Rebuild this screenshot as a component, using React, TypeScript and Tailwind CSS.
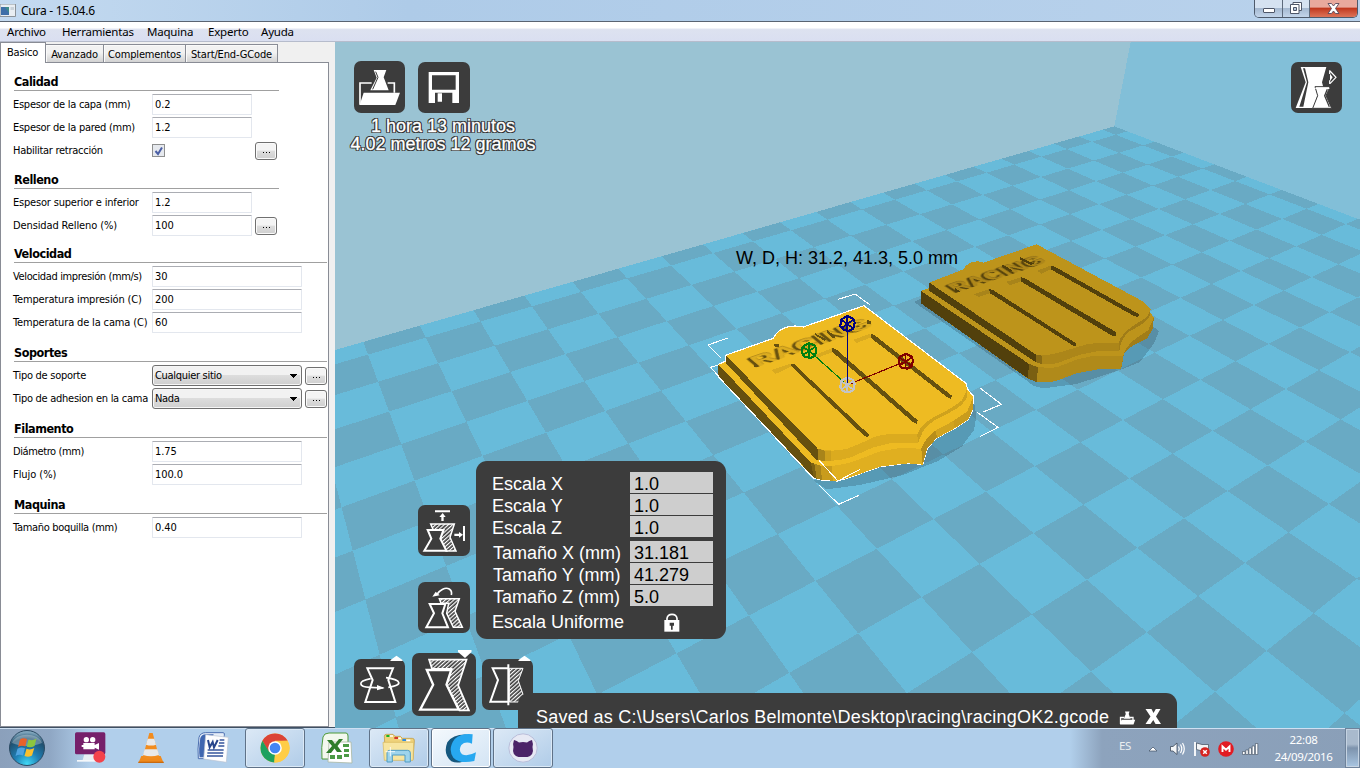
import type { ReactNode } from "react";

/* ---------- build plate: projective mapping from tile grid to screen ---------- */

type Point = [number, number];

const depth = (i: number, j: number) => 1 - 0.027445 * i - 0.0185807 * j;

const project = (i: number, j: number): Point => {
  const w = depth(i, j);
  return [
    (1115.808 - 4.06276 * i - 44.22725 * j) / w,
    (134.769 + 6.60686 * i + 4.40224 * j) / w,
  ];
};

const quad = (points: Point[]) =>
  "M" + points.map(([x, y]) => `${x.toFixed(1)} ${y.toFixed(1)}`).join("L") + "Z";

const darkTiles = (() => {
  const parts: string[] = [];
  for (let i = -1; i < 18; i++) {
    for (let j = -1; j < 28; j++) {
      if ((i + j) % 2 !== 0 || depth(i + 1, j + 1) < 0.1) continue;
      const i0 = Math.max(i, -0.5);
      const j0 = Math.max(j, -0.5);
      parts.push(
        quad([project(i0, j0), project(i + 1, j0), project(i + 1, j + 1), project(i0, j + 1)]),
      );
    }
  }
  return parts.join("");
})();

const floor = quad([project(-0.5, -0.5), project(12, -0.5), [1700, 900], [200, 900], project(-0.5, 24)]);

/* ---------- scene ---------- */

function Wheel({ x, y, color }: { x: number; y: number; color: string }) {
  return (
    <g transform={`translate(${x} ${y})`} fill="none" stroke={color} strokeWidth="6.5">
      <path d="M0-23L17-15L22-4L18 15L5 22L-11 19L-21 8L-19-12Z" />
      <path d="M0-22V22M-19-12L18 14M19-12L-18 13" strokeWidth="5" />
    </g>
  );
}

function FrontShield() {
  return (
    <g transform="translate(690 230) scale(.33333)">
      <path
        d="M852 515L859 560L852 600L815 650L740 695L705 708L640 735L510 765L410 778L370 752L700 640Z"
        fill="#2c4450"
        fillOpacity=".27"
      />
      <path
        d="M85 403L106 394V376L250 325C262 298 295 281 340 291L522 227L828 460L833 478L850 498L848 540L835 568L800 592L740 624L712 655L698 704Q670 699 640 701L570 710L480 742L442 753L395 750L370 744L85 440Z"
        fill="#EEBB22"
        stroke="#fff"
        strokeWidth="3.5"
      />
      <path d="M85 403L362 697L372 743L85 438Z" fill="#66500F" />
      <path d="M107 376L383 656V690L378 688L108 399Z" fill="#66500F" />
      <path
        d="M383 656Q430 668 475 655L510 641L560 618L605 611L682 613Q690 590 720 568L780 536L815 512L832 476L832 500Q822 526 780 547L730 573Q690 603 684 638L600 640L550 652L480 683Q430 698 383 690Z"
        fill="#DBAB1F"
      />
      <path
        d="M682 613Q690 590 720 568L780 536L815 512L832 476L832 500Q822 526 780 547L730 573Q690 603 684 638Z"
        fill="#CFA21D"
      />
      <path
        d="M362 697L392 707Q440 712 500 691L570 664L630 654L694 656Q706 625 736 602L790 573L832 544L850 500L848 540L835 568L800 592L740 624L712 655L698 704Q670 699 640 701L570 710L480 742L442 753L395 750L372 744Z"
        fill="#E0AF20"
      />
      <path d="M362 697L392 707L396 750L372 744Z" fill="#A8841A" />
      <path d="M362 697L373 701L380 746L372 744Z" fill="#7A6012" />
      <path d="M392 707Q410 710 425 708L428 752L396 750Z" fill="#C99C1C" />
      <path d="M694 656Q706 625 736 602L742 622L712 655L698 704Z" fill="#B88E1A" />
      <path d="M736 602L790 573L794 594L742 624Z" fill="#D2A41F" />
      <path d="M790 573L832 544L850 500L848 540L835 568L794 594Z" fill="#C99C1D" />
      <path d="M383 656L404 662V693L383 690Z" fill="#A8841A" />
      <path d="M404 662L424 664V694L404 693ZM682 613L694 590L696 612L684 638Z" fill="#CC9F1D" />
      <path
        d="M245 420L300 401L308 408L256 432ZM372 376L425 355L430 366L382 383ZM489 330L540 311L546 321L500 339Z"
        fill="#D9AA20"
      />
      <path d="M303 402H312L538 615L534 621L524 619L305 410Z" fill="#66500F" />
      <path d="M426 352L442 361L683 571L680 581L670 577L427 366Z" fill="#66500F" />
      <path d="M542 310L553 315L787 498L782 506L772 502L543 324Z" fill="#66500F" />
      <text
        transform="matrix(2.34 -.82 1.1 .92 203 411)"
        fontFamily="Liberation Sans, sans-serif"
        fontSize="38"
        fontWeight="700"
        fill="#DDAD20"
        className="[filter:drop-shadow(-4px_0_0_#66500F)_drop-shadow(1px_-2px_0_#B88E1A)]"
      >
        RACING
      </text>
      <path
        d="M192 401L203 405L200 411L191 409ZM253 343L266 343V352L254 351ZM376 310L410 329L404 333L376 316ZM410 299L438 321L428 325L410 308ZM530 268L545 275L540 284L530 280Z"
        fill="#66500F"
      />
      <g fill="none" stroke="#fff" strokeWidth="3.2">
        <path d="M445 208L495 192L539 224M113 324L54 345L92 383M84 405L62 412L85 438M870 474L934 523L880 546M862 547L924 592L870 620M388 692L444 753L510 718M388 766L446 823L507 796" />
      </g>
      <g strokeWidth="3.5" fill="none">
        <path d="M357 362L472 465" stroke="#007F10" />
        <path d="M472 465L647 394" stroke="#7F0000" />
      </g>
      <Wheel x={357} y={362} color="#007F10" />
      <Wheel x={647} y={394} color="#7F0000" />
      <Wheel x={472} y={281} color="#00007F" />
      <Wheel x={472} y={465} color="#C4C4C4" />
      <path d="M472 460V300" stroke="#00007F" strokeWidth="3.5" />
    </g>
  );
}

function BackShield() {
  return (
    <g transform="translate(900 230) scale(.33333)">
      <path
        d="M63 205L42 216L385 455L400 468L430 475L530 462L660 420L720 396L762 340L777 303L760 290Z"
        fill="#2c4450"
        fillOpacity=".27"
      />
      <path
        d="M63 183L88 174V158L190 118C200 98 228 88 250 98L410 43L725 212L752 236L750 248L762 262L758 296L742 325L690 352L672 372L663 418L600 417L530 430L470 452Q430 464 385 447L63 220Z"
        fill="#BD941B"
      />
      <path d="M63 183L386 401V447L63 220Z" fill="#52400C" />
      <path d="M88 158L408 374V397L88 183Z" fill="#52400C" />
      <path
        d="M408 374Q440 380 490 364L560 343L600 338H656Q664 312 700 287L740 262L752 238L748 262Q735 280 690 303Q662 324 658 363L600 362L540 374L470 400Q430 407 408 397Z"
        fill="#AC8619"
      />
      <path d="M656 338Q664 312 700 287L740 262L752 238L748 262Q735 280 690 303Q662 324 658 363Z" fill="#A07C18" />
      <path
        d="M386 401Q420 417 470 412L530 389L580 377L670 378Q676 348 712 322L745 300L762 262L758 296L742 325L690 352L672 372L663 418L600 417L530 430L470 452Q430 464 385 447Z"
        fill="#B08A1A"
      />
      <path d="M386 401L414 412L410 456L385 447Z" fill="#7A5F12" />
      <path d="M670 378Q676 348 712 322L745 300L762 262L758 296L742 325L690 352L672 372L663 418Z" fill="#A17D18" />
      <path d="M408 374L426 377V403L408 397Z" fill="#886A14" />
      <path
        d="M222 193L266 178L274 188L236 201ZM318 156L362 142L368 152L330 166ZM412 122L452 107L458 116L424 131Z"
        fill="#A8841A"
      />
      <path d="M268 177L282 182L530 341L527 349L518 346L269 189Z" fill="#52400C" />
      <path d="M363 141L378 147L649 307L646 320L638 318L364 155Z" fill="#52400C" />
      <path d="M453 106L466 111L719 254L714 261L702 258L454 119Z" fill="#52400C" />
      <text
        transform="matrix(1.88 -.63 1.2 .78 170 188)"
        fontFamily="Liberation Sans, sans-serif"
        fontSize="37"
        fontWeight="700"
        fill="#AE871A"
        className="[filter:drop-shadow(-4px_0_0_#52400C)_drop-shadow(1px_-2px_0_#94731A)]"
      >
        RACING
      </text>
      <path d="M165 173L180 184L174 188L164 181ZM306 103L338 121L328 125L306 110ZM360 81L402 101L392 105L360 88Z" fill="#52400C" />
    </g>
  );
}

function Scene() {
  return (
    <svg className="block h-[686px] w-[1025px]" viewBox="335 42 1025 686" shapeRendering="crispEdges">
      <rect x="335" y="42" width="1025" height="686" fill="#9AC3D3" />
      <path d="M1130.7 42H1360V400H1114.3V126.3Z" fill="#82BFD8" />
      <path d={floor} fill="#68BBDA" />
      <path d={darkTiles} fill="#69AAC4" />
      <BackShield />
      <FrontShield />
    </svg>
  );
}

/* ---------- viewport tools ---------- */

const tile = "block rounded-[7px] bg-[#3C3C3C]";

const HatchDefs = () => (
  <defs>
    <pattern id="hatch" width="8.5" height="8.5" patternUnits="userSpaceOnUse" patternTransform="rotate(-42)">
      <rect width="8.5" height="3.6" fill="#fff" />
    </pattern>
  </defs>
);

const OpenIcon = () => (
  <svg className={`${tile} h-[52px] w-[51px]`} viewBox="57 63 153 156">
    <path d="M75 194V129H110M158 129H178V158" fill="none" stroke="#fff" strokeWidth="5" />
    <path d="M86 158H195L181 195H74L80 176Z" fill="#fff" />
    <path d="M116 90H154L146 112L161 151H106L125 113Z" fill="#fff" />
    <path d="M122 95L129 112L113 148" fill="none" stroke="#3C3C3C" strokeWidth="3" />
  </svg>
);

const SaveIcon = () => (
  <svg className={`${tile} h-[51px] w-[52px]`} viewBox="249 66 156 153">
    <path d="M281 96H372V189H352V158H300V189H281ZM291 106V149H362V106Z" fill="#fff" fillRule="evenodd" />
    <path d="M308 160H321V185H308Z" fill="#fff" />
  </svg>
);

const ViewIcon = () => (
  <svg className={`${tile} h-[51px] w-[51px]`} viewBox="813 186 153 153">
    <path d="M842 201H919L906 247L910 262H885L893 285L880 324H827L857 247Z" fill="#fff" />
    <path d="M849 205L861 247L838 320L850 320L865 247L855 205Z" fill="#3C3C3C" />
    <path d="M885 260H930L918 287L935 325H878L893 287Z" fill="#fff" stroke="#3C3C3C" strokeWidth="3" />
    <path d="M886 265H928" stroke="#fff" strokeWidth="4" />
    <path d="M922 268L914 287L928 320" fill="none" stroke="#3C3C3C" strokeWidth="4" />
    <path d="M929 211V222M929 241V252M930 213L948 232L930 251" fill="none" stroke="#fff" strokeWidth="3.5" />
    <path d="M930 221L938 232L930 243Z" fill="#fff" />
  </svg>
);

const ToMaxIcon = () => (
  <svg className={`${tile} h-[51px] w-[52px]`} viewBox="234 165 156 153">
    <HatchDefs />
    <path d="M285 184H330M372 228V273" stroke="#fff" strokeWidth="6" />
    <path d="M308 189L317 201H311V213H304V201H298ZM369 254L357 246V251H343V258H357V263Z" fill="#fff" />
    <path d="M272 222H343L330 262L348 303H318L300 268L311 240H280Z" fill="url(#hatch)" stroke="#fff" strokeWidth="4.5" />
    <path d="M263 240H310L301 266L319 302H253L274 266Z" fill="#3C3C3C" stroke="#fff" strokeWidth="6" />
  </svg>
);

const ResetIcon = () => (
  <svg className={`${tile} h-[51px] w-[52px]`} viewBox="234 396 156 153">
    <path d="M334 435C338 418 322 410 308 418C300 422 294 428 290 434" fill="none" stroke="#fff" strokeWidth="5" />
    <path d="M277 440L287 425L299 436Z" fill="#fff" />
    <path d="M298 446H358L345 484L367 532H340L320 490L326 460H303Z" fill="url(#hatch)" stroke="#fff" strokeWidth="4.5" />
    <path d="M269 462H316L307 490L324 532H259L282 490Z" fill="#3C3C3C" stroke="#fff" strokeWidth="6" />
  </svg>
);

const RotateIcon = () => (
  <svg className={`${tile} h-[51px] w-[51px]`} viewBox="42 627 153 153">
    <path d="M82 655H159L145 690L166 756H76L98 690Z" fill="none" stroke="#fff" strokeWidth="6" />
    <path d="M92 686C50 694 56 711 90 712M138 683C186 690 190 706 145 712M90 712L130 714" fill="none" stroke="#fff" strokeWidth="5" />
    <path d="M134 714L111 705V721Z" fill="#fff" />
  </svg>
);

const ScaleIcon = () => (
  <svg className={`${tile} h-[63px] w-[64px]`} viewBox="216 609 191 189">
    <path d="M267 629H379L354 706L386 781H358L318 706L334 657H276Z" fill="url(#hatch)" stroke="#fff" strokeWidth="5.5" />
    <path d="M260 660H333L319 704L356 779H240L279 704Z" fill="#3C3C3C" stroke="#fff" strokeWidth="7" />
  </svg>
);

const MirrorIcon = () => (
  <svg className={`${tile} h-[51px] w-[51px]`} viewBox="427 627 153 153">
    <path d="M509 655H550L536 692L553 742L545 756H509Z" fill="url(#hatch)" stroke="#fff" strokeWidth="3" />
    <path d="M506 655H459L475 690L452 755H506M506 643V766" fill="none" stroke="#fff" strokeWidth="6" />
  </svg>
);

const LockIcon = () => (
  <svg className="h-[19px] w-[16px]" viewBox="971 490 48 57">
    <path d="M980 514V506Q982 494 995 494Q1008 494 1010 506V514" fill="none" stroke="#fff" strokeWidth="5" />
    <path d="M972 511H1017V546H972Z" fill="#fff" />
    <path d="M988 519H1001V528H997V540H992V528H988Z" fill="#3C3C3C" />
  </svg>
);

const scaleRows: [string, string][] = [
  ["Escala X", "1.0"],
  ["Escala Y", "1.0"],
  ["Escala Z", "1.0"],
  ["Tamaño X (mm)", "31.181"],
  ["Tamaño Y (mm)", "41.279"],
  ["Tamaño Z (mm)", "5.0"],
];

function ScalePanel() {
  return (
    <div className="h-[178px] w-[250px] rounded-[11px] bg-[#3C3C3C] pt-[11px] pr-[13px] pl-[16px] text-[18px] leading-[21px] text-white">
      {scaleRows.map(([label, value], k) => (
        <div key={label} className={k === 3 ? "mt-[3px] flex h-[22px] justify-between" : "flex h-[22px] justify-between"}>
          <span className={k > 2 ? "pt-[2px] pl-px whitespace-nowrap" : "pt-[2px] whitespace-nowrap"}>{label}</span>
          <span className="h-[21px] w-[83px] bg-[#CECECE] pt-[2px] pl-[4px] leading-[20px] text-black">{value}</span>
        </div>
      ))}
      <div className="mt-[4px] flex h-[22px] items-center">
        <span className="w-[172px] whitespace-nowrap">Escala Uniforme</span>
        <LockIcon />
      </div>
    </div>
  );
}

function Viewport() {
  return (
    <div className="relative h-[686px] w-[1025px] overflow-hidden font-['Liberation_Sans',Arial,sans-serif]">
      <Scene />
      <div className="absolute top-[19px] left-[19px] flex gap-[13px]">
        <OpenIcon />
        <span className="pt-px">
          <SaveIcon />
        </span>
      </div>
      <div className="absolute top-[75px] left-[8px] w-[200px] text-center text-[18px] leading-[18px] whitespace-nowrap text-white [text-shadow:1px_0_0_#333,-1px_0_0_#333,0_1px_0_#333,0_-1px_0_#333,1px_1px_0_#333,-1px_-1px_0_#333,1px_-1px_0_#333,-1px_1px_0_#333] [-webkit-text-stroke:0.3px_#fff]">
        <div>1 hora 13 minutos</div>
        <div>4.02 metros 12 gramos</div>
      </div>
      <div className="absolute top-[20px] right-[18px]">
        <ViewIcon />
      </div>
      <div className="absolute top-[206px] left-[401px] text-[18px] leading-[21px] whitespace-nowrap text-black">
        W, D, H: 31.2, 41.3, 5.0 mm
      </div>
      <div className="absolute top-[463px] left-[83px] flex flex-col gap-[26px]">
        <ToMaxIcon />
        <ResetIcon />
      </div>
      <div className="absolute top-[419px] left-[141px]">
        <ScalePanel />
      </div>
      <div className="absolute top-[611px] left-[19px] flex">
        <span className="mr-[7px] pt-[6px]">
          <RotateIcon />
        </span>
        <ScaleIcon />
        <span className="ml-[6px] pt-[6px]">
          <MirrorIcon />
        </span>
      </div>
      <svg className="absolute top-[607px] left-[55px] h-[12px] w-[144px]" viewBox="0 0 144 12">
        <path d="M0.500 12.500V11L6.500 6.800L12.500 11V12.500ZM128.500 12.500V11L134.500 6.800L140.500 11V12.500Z" fill="#fff" />
        <path d="M68 1H81.500V3L75 9L68 3Z" fill="#fff" />
      </svg>
      <div className="absolute top-[651px] left-[183px] flex h-[40px] w-[659px] rounded-t-[11px] bg-[#3C3C3C] pt-[14px] pl-[18px] text-[18px] leading-[21px] whitespace-nowrap text-white">
        <span className="w-[583px] tracking-[0.25px]">Saved as C:\Users\Carlos Belmonte\Desktop\racing\racingOK2.gcode</span>
        <svg className="mt-[3px] h-[16px] w-[17px]" viewBox="0 0 17 16">
          <path d="M1.500 14V7.500H5M11 7.500H14V10" fill="none" stroke="#fff" strokeWidth="1.300" />
          <path d="M2.500 9.800H16.200L14.500 14.500H1Z" fill="#fff" />
          <path d="M6 1.500H10.500L9.700 4L11.500 8.800H4.700L6.800 4Z" fill="#fff" />
        </svg>
        <svg className="mt-[1px] ml-[9px] h-[17px] w-[17px]" viewBox="0 0 17 17">
          <path d="M.5 1H6.500L8.500 5L10.800 1H15.500L11 8.500L16 16H10.500L8.300 12L5.500 16H.5L5.500 8.500Z" fill="#fff" />
        </svg>
      </div>
    </div>
  );
}

/* ---------- settings panel ---------- */

const More = () => (
  <button className="ml-[3px] flex h-[18px] w-[22px] shrink-0 items-center justify-center gap-[2px] rounded-[3px] border border-[#707070] bg-linear-to-b from-[#F4F4F4] from-45% via-[#DDDDDD] via-50% to-[#CFCFCF] pt-[3px] shadow-[inset_0_0_0_1px_#fafafa]">
    <i className="size-px bg-black" />
    <i className="size-px bg-black" />
    <i className="size-px bg-black" />
  </button>
);

function Row({ label, tight = "tracking-[-0.27px]", children }: { label: string; tight?: string; children: ReactNode }) {
  return (
    <div className="mb-[2px] flex h-[21px] items-center">
      <span className={`${tight} w-[139px] shrink-0 pt-[2px] whitespace-nowrap`}>{label}</span>
      {children}
    </div>
  );
}

const Field = ({ value, wide }: { value: string; wide?: boolean }) => (
  <span
    className={`${wide ? "w-[150px]" : "w-[100px]"} h-[21px] shrink-0 rounded-[1px] border border-[#E3E7EE] border-t-[#ABADB3] pl-[2px] leading-[19px] tracking-[-0.1px]`}
  >
    {value}
  </span>
);

const Choice = ({ value }: { value: string }) => (
  <span className="flex h-[21px] w-[150px] shrink-0 items-center justify-between rounded-[3px] border border-[#707070] bg-linear-to-b from-[#F2F2F2] from-45% via-[#DDDDDD] via-50% to-[#CFCFCF] pr-[4px] pl-[2px] tracking-[-0.3px] shadow-[inset_0_0_0_1px_#f6f6f6]">
    <span className="pt-[2px]">{value}</span>
    <svg className="h-[4px] w-[7px]" viewBox="0 0 7 4" shapeRendering="crispEdges">
      <path d="M0 0H7L3.500 4Z" />
    </svg>
  </span>
);

function Section({ title, size, wide, children }: { title: string; size: string; wide?: boolean; children: ReactNode }) {
  return (
    <section>
      <h2
        className={`${size} ${wide ? "w-[313px]" : "w-[265px]"} mb-[3px] ml-px flex items-end border-b border-[#A0A0A0] text-[12.5px] leading-[17px] font-bold tracking-[-0.45px]`}
      >
        {title}
      </h2>
      {children}
    </section>
  );
}

const tabs: [string, string][] = [
  ["Avanzado", "w-[58px]"],
  ["Complementos", "w-[82px]"],
  ["Start/End-GCode", "w-[92px]"],
];

function Settings() {
  return (
    <aside className="flex h-[685px] w-[335px] flex-col bg-[#F0F0F0] pr-[6px] font-['DejaVu_Sans_Condensed','Noto_Sans',sans-serif] text-[11px] text-black">
      <div className="z-10 flex h-[20px] items-end">
        <div className="-mb-px h-[21px] w-[46px] border border-b-0 border-[#898C95] bg-white pt-[2px] pl-[6px] leading-[15px] tracking-[-0.2px]">
          Basico
        </div>
        {tabs.map(([name, width]) => (
          <div
            key={name}
            className={`${width} h-[18px] border border-b-0 border-l-0 border-[#898C95] bg-linear-to-b from-[#F2F2F2] from-45% to-[#D2D2D2] pt-[2px] text-center leading-[16px] tracking-[-0.15px] whitespace-nowrap shadow-[inset_1px_1px_0_#fafafa]`}
          >
            {name}
          </div>
        ))}
      </div>
      <div className="flex-1 border border-[#898C95] bg-white pt-[10px] pl-[12px]">
        <Section title="Calidad" size="h-[18px]">
          <Row label="Espesor de la capa (mm)">
            <Field value="0.2" />
          </Row>
          <Row label="Espesor de la pared (mm)">
            <Field value="1.2" />
          </Row>
          <Row label="Habilitar retracción">
            <span className="mr-[87px] flex size-[13px] shrink-0 items-center justify-center border border-[#8E8F8F] bg-[#E6E9EE]">
              <svg className="size-[10px]" viewBox="0 0 10 10">
                <path d="M1.500 5L4 8L8 1.500" fill="none" stroke="#4B5FA5" strokeWidth="2" />
              </svg>
            </span>
            <More />
          </Row>
        </Section>
        <Section title="Relleno" size="h-[26px]">
          <Row label="Espesor superior e inferior" tight="tracking-[-0.19px]">
            <Field value="1.2" />
          </Row>
          <Row label="Densidad Relleno (%)" tight="tracking-[-0.12px]">
            <Field value="100" />
            <More />
          </Row>
        </Section>
        <Section title="Velocidad" size="h-[25px]" wide>
          <Row label="Velocidad impresión (mm/s)" tight="tracking-[-0.36px]">
            <Field value="30" wide />
          </Row>
          <Row label="Temperatura impresión (C)" tight="tracking-[-0.15px]">
            <Field value="200" wide />
          </Row>
          <Row label="Temperatura de la cama (C)" tight="tracking-[-0.15px]">
            <Field value="60" wide />
          </Row>
        </Section>
        <Section title="Soportes" size="h-[27px]" wide>
          <Row label="Tipo de soporte">
            <Choice value="Cualquier sitio" />
            <More />
          </Row>
          <Row label="Tipo de adhesion en la cama">
            <Choice value="Nada" />
            <More />
          </Row>
        </Section>
        <Section title="Filamento" size="h-[27px]" wide>
          <Row label="Diámetro (mm)" tight="tracking-[-0.4px]">
            <Field value="1.75" wide />
          </Row>
          <Row label="Flujo (%)" tight="tracking-[-0.05px]">
            <Field value="100.0" wide />
          </Row>
        </Section>
        <Section title="Maquina" size="h-[27px]" wide>
          <Row label="Tamaño boquilla (mm)" tight="tracking-[-0.32px]">
            <Field value="0.40" wide />
          </Row>
        </Section>
      </div>
    </aside>
  );
}

/* ---------- window frame ---------- */

function TitleBar() {
  return (
    <header className="flex h-[22px] justify-between border-b border-[#5A6472] bg-linear-to-r from-[#C4DAF0] via-[#AECBE8] via-30% to-[#B9D2EC] pr-[2px]">
      <div className="flex items-center gap-[5px]">
        <svg className="h-[13px] w-[16px]" viewBox="0 0 16 13">
          <path d="M0 0H15.500V12.500H0Z" fill="#E9EEF2" stroke="#8C9399" />
          <path d="M1 3H9V11H1Z" fill="#3E8C8A" />
          <path d="M1 3H5L9 9V11H1Z" fill="#3F6FA8" />
          <path d="M10.500 3H14V6H10.500Z" fill="#C9D2DA" />
        </svg>
        <span className="text-[12px] tracking-[-0.25px]">Cura - 15.04.6</span>
      </div>
      <div className="flex h-[18px] overflow-hidden rounded-b-[5px] border border-t-0 border-[#4E5A6B]">
        <span className="flex w-[28px] items-center justify-center border-r border-[#5D6A7C] bg-linear-to-b from-[#D5E2F1] from-45% via-[#A5B9D1] via-50% to-[#C3D5EA] pt-[4px]">
          <i className="h-[5px] w-[12px] rounded-[1px] border border-[#4E5668] bg-white" />
        </span>
        <span className="flex w-[27px] items-start justify-center border-r border-[#5D6A7C] bg-linear-to-b from-[#D5E2F1] from-45% via-[#A5B9D1] via-50% to-[#C3D5EA] pt-[2px]">
          <svg className="size-[12px]" viewBox="0 0 12 12">
            <path d="M3 .5H11.500V8.500H3Z" fill="#fff" stroke="#4E5668" />
            <path d="M.5 2.500H9V11.500H.5Z" fill="#fff" stroke="#4E5668" />
            <path d="M3.500 5.500H6.500V8.500H3.500Z" fill="#B7C8DC" stroke="#4E5668" />
          </svg>
        </span>
        <span className="flex w-[47px] items-start justify-center bg-linear-to-b from-[#E9A99D] from-40% via-[#C1391F] via-50% to-[#DD7358] pt-[3px]">
          <svg className="h-[11px] w-[13px]" viewBox="0 0 13 11">
            <path d="M1 .5H4.500L6.500 3L8.500 .5H12L8.500 5.500L12 10.500H8.500L6.500 8L4.500 10.500H1L4.500 5.500Z" fill="#fff" stroke="#57475A" strokeWidth=".9" />
          </svg>
        </span>
      </div>
    </header>
  );
}

const MenuBar = () => (
  <nav className="flex h-[20px] items-center gap-[14px] border-b border-[#B6BCCC] bg-linear-to-b from-white from-30% via-[#DDE2F0] via-40% to-[#DADFF1] pl-[7px] text-[11.5px] tracking-[-0.2px] text-black">
    <span className="w-[41px]">Archivo</span>
    <span className="w-[71px]">Herramientas</span>
    <span className="w-[47px]">Maquina</span>
    <span className="w-[39px]">Experto</span>
    <span>Ayuda</span>
  </nav>
);

/* ---------- taskbar ---------- */

const StartOrb = () => (
  <svg className="size-[38px]" viewBox="0 0 38 38">
    <defs>
      <radialGradient id="orb" cx=".5" cy=".95" r=".9">
        <stop offset="0" stopColor="#3FD8F5" />
        <stop offset=".4" stopColor="#1F7FB5" />
        <stop offset=".8" stopColor="#20506F" />
        <stop offset="1" stopColor="#7FA5BC" />
      </radialGradient>
    </defs>
    <circle cx="19" cy="19" r="17.500" fill="url(#orb)" stroke="#2B4A63" />
    <path d="M4 14C8 3 30 3 34 14C25 18 13 18 4 14Z" fill="#fff" fillOpacity=".3" />
    <path d="M12 10.500C14.500 8.500 16.500 9 19 10L17.300 17.500C15 16.500 12.500 16.500 10 18Z" fill="#E8622A" />
    <path d="M20.500 10.500C23 11.500 25.500 11.500 28.500 9.500L26.500 17C24 18.500 21.500 18.500 18.800 17.800Z" fill="#8CC63F" />
    <path d="M9.500 19.800C12 18.300 14.500 18.300 17 19.300L15 26.500C12.500 25.500 10 25.500 7.500 27Z" fill="#4FA3E0" />
    <path d="M18.500 19.700C21 20.700 23.500 20.700 26.300 19L24 26.500C21.500 28 19 28 16.500 27Z" fill="#FBC02D" />
  </svg>
);

const RecorderIcon = () => (
  <svg className="ml-[3px] size-[32px]" viewBox="222 38 96 96">
    <path d="M250 105H290L300 122H245Z" fill="#E8EEF3" />
    <path d="M228 122H285V127H228Z" fill="#F4F7FA" />
    <rect x="222" y="39" width="91" height="66" rx="5" fill="#76206A" />
    <circle cx="256" cy="61" r="8" fill="#fff" />
    <circle cx="275" cy="61" r="8" fill="#fff" />
    <path d="M247 71H281V77L294 71V91L281 85V90H247V83H242V77H247Z" fill="#fff" />
    <circle cx="295" cy="112" r="18" fill="#F4434B" />
  </svg>
);

const VlcIcon = () => (
  <svg className="h-[32px] w-[28px]" viewBox="412 36 82 96">
    <path d="M424 108H482L491 129H415Z" fill="#F08A1C" />
    <path d="M415 125H491V129H415Z" fill="#C96A10" />
    <path d="M448 39H458L478 113Q453 122 428 113Z" fill="#F28C1E" />
    <path d="M443 56H463L468 74Q453 79 438 74Z" fill="#E9E9E9" />
    <path d="M434 88H472L477 105Q453 113 429 105Z" fill="#E9E9E9" />
  </svg>
);

const WordIcon = () => (
  <svg className="h-[32px] w-[32px]" viewBox="590 36 96 96">
    <path d="M596 52Q600 38 616 38H668Q674 38 672 46L660 108Q658 116 650 116H594Q591 90 596 52Z" fill="#E6EEF8" stroke="#4C6FB0" strokeWidth="3" />
    <path d="M600 54Q604 44 616 43H640L612 112H598Q594 90 600 54Z" fill="#3F66B0" />
    <path d="M616 44L684 52L678 127L610 117Z" fill="#FDFDFE" stroke="#B9C3D2" strokeWidth="2" />
    <path d="M658 60H672M656 69H672M654 78H672M622 90H670M621 99H669M620 108H668" stroke="#34549C" strokeWidth="4" />
    <path d="M623 60L628 82L637 66L641 82L652 60" fill="none" stroke="#27458C" strokeWidth="6" />
  </svg>
);

const ChromeIcon = () => (
  <svg className="size-[30px]" viewBox="0 0 30 30">
    <circle cx="15" cy="15" r="14.500" fill="#FFCD46" />
    <path d="M2.400 7.800A14.500 14.500 0 0 1 27.600 7.800L15 8.300L8.500 18.500Z" fill="#DB4437" />
    <path d="M2.400 7.800L9 18.500L15 21.600L14.300 29.500A14.500 14.500 0 0 1 2.400 7.800Z" fill="#1DA15F" />
    <path d="M27.600 7.800H15V21L14.300 29.500A14.500 14.500 0 0 0 27.600 7.800Z" fill="#FFCD46" />
    <circle cx="15" cy="15" r="6.800" fill="#fff" />
    <circle cx="15" cy="15" r="5.300" fill="#4285F4" />
  </svg>
);

const ExcelIcon = () => (
  <svg className="h-[32px] w-[32px]" viewBox="0 0 32 32">
    <path d="M2 5Q3 1 8 1H25Q27 1 27 4V25Q26 27 24 27H1Q0 15 2 5Z" fill="#F3F8EE" stroke="#4E9A3A" />
    <path d="M8 10H30L31 31L7 30Z" fill="#fff" stroke="#A9B8A2" strokeWidth=".8" />
    <path d="M6 8H11L14 12L18 7H22L16.500 14L21 20H16L13.500 16.500L10 21H5L11 14Z" fill="#2F7D2A" />
    <path d="M22 12H28V15H22ZM23 17H28V20H23ZM23 22H28V25H23ZM9 23H14V27H9ZM16 23H21V27H16Z" fill="#4B9A45" />
  </svg>
);

const FolderIcon = () => (
  <svg className="h-[30px] w-[34px]" viewBox="127 162 102 90">
    <path d="M134 172Q134 166 140 166H160L166 172H182L188 178H218Q225 178 224 186L220 242H138Z" fill="#EFD27A" stroke="#B8933A" strokeWidth="2" />
    <path d="M140 168H150V174H140Z" fill="#18B324" />
    <path d="M164 174H175V180H164Z" fill="#D2382C" />
    <path d="M188 180H199V186H188Z" fill="#2F8BE0" />
    <path d="M150 171H160M176 178H184M200 184H212" stroke="#fff" strokeWidth="5" />
    <path d="M130 190H222L220 244H134Z" fill="#F7E5A0" stroke="#D6B65B" strokeWidth="2" />
    <path d="M142 249V222Q142 214 150 214H204Q212 214 212 222V249H196V228H158V249Z" fill="#9ED4EC" stroke="#4F9CC4" strokeWidth="3" />
    <path d="M152 204V232M138 218H166" stroke="#fff" strokeWidth="2.500" />
  </svg>
);

const CuraIcon = () => (
  <svg className="h-[30px] w-[32px]" viewBox="315 158 96 90">
    <path d="M384 163Q340 160 322 186Q308 222 334 243Q350 250 368 244L350 210Z" fill="#15587F" />
    <path d="M398 162L396 190Q376 182 364 194Q354 210 366 222Q382 230 408 216L403 242Q360 252 340 232Q322 206 344 176Q364 158 398 162Z" fill="#27A8F0" />
  </svg>
);

const KrakenIcon = () => (
  <svg className="size-[30px]" viewBox="0 0 30 30">
    <circle cx="15" cy="15" r="14.200" fill="#E7E9F4" stroke="#B9BEDA" />
    <path d="M6 7Q9 7.500 11 9.500Q15 8.500 19 9.500Q21 7.500 24 7Q25.500 11 24.500 14Q26.500 22 19.500 24H10.500Q3.500 22 5.500 14Q4.500 11 6 7Z" fill="#4B2368" />
  </svg>
);

const apps: { name: string; icon: ReactNode; open?: boolean; active?: boolean }[] = [
  { name: "recorder", icon: <RecorderIcon /> },
  { name: "vlc", icon: <VlcIcon /> },
  { name: "word", icon: <WordIcon /> },
  { name: "chrome", icon: <ChromeIcon />, open: true },
  { name: "excel", icon: <ExcelIcon /> },
  { name: "explorer", icon: <FolderIcon />, open: true },
  { name: "cura", icon: <CuraIcon />, open: true, active: true },
  { name: "kraken", icon: <KrakenIcon />, open: true },
];

function Tray() {
  return (
    <div className="flex h-full items-center text-[12px] text-white">
      <span className="w-[30px] pb-[4px] text-[11.5px] tracking-[-0.3px] text-[#E9EEF0]">ES</span>
      <svg className="mt-[2px] h-[20px] w-[112px]" viewBox="0 0 112 20">
        <path d="M0 12L4 8L8 12Z" fill="#fff" stroke="#3E4E63" strokeWidth=".7" />
        <path d="M21.500 7.500H24L28 4V15.500L24 12H21.500Z" fill="#F4F6F8" stroke="#3D4A5A" strokeWidth=".8" />
        <path d="M29.500 7.500Q31 9.800 29.500 12.200M31.500 5.500Q34 9.800 31.500 14M33.500 4Q37 9.800 33.500 15.500" fill="none" stroke="#fff" strokeWidth="1.200" />
        <path d="M46 3V17" stroke="#fff" strokeWidth="1.800" />
        <path d="M47.500 4L53 5.500H59.500V12H53L47.500 10.500Z" fill="#F2F4F6" stroke="#3D4A5A" strokeWidth=".7" />
        <circle cx="56" cy="13" r="4.800" fill="#D6231F" />
        <path d="M54.200 11.200L57.800 14.800M57.800 11.200L54.200 14.800" stroke="#fff" strokeWidth="1.500" />
        <circle cx="77" cy="10" r="7.800" fill="#E21B23" />
        <path d="M73.500 13V7.500L77 10.800L80.500 7.500V13" fill="none" stroke="#fff" strokeWidth="1.900" />
        <path d="M93.500 15.500V12.500H96V15.500ZM96.800 15.500V11H99.200V15.500ZM100 15.500V9H102.400V15.500ZM103.200 15.500V7H105.600V15.500ZM106.400 15.500V4.500H108.800V15.500Z" fill="#fff" stroke="#3D4A5A" strokeWidth=".6" />
      </svg>
      <div className="w-[84px] pl-px text-center text-[11.5px] leading-[17px] tracking-[-0.3px]">
        <div>22:08</div>
        <div>24/09/2016</div>
      </div>
      <div className="h-full w-[15px] border border-[#6F839B] bg-linear-to-b from-[#A9BACD] from-40% via-[#7D93AD] via-50% to-[#A9C6E2] shadow-[inset_0_0_0_1px_#c5d3e2]" />
    </div>
  );
}

const Taskbar = () => (
  <footer className="flex h-[41px] items-stretch justify-between border-t border-[#3F5063] bg-[linear-gradient(to_right,#8BA0BB_0,#8FA7C4_50px,#B1CFEB_90px,#B1CFEB_1070px,#8DA3BD_1102px,#8A9FB8_1360px)] shadow-[inset_0_1px_0_#cfe0f2]">
    <div className="flex">
      <div className="flex w-[58px] items-center pl-[8px]">
        <StartOrb />
      </div>
      {apps.map(({ name, icon, open, active }) => (
        <div key={name} className="w-[62px] px-px">
          <div
            className={`flex h-full items-center justify-center ${
              open
                ? active
                  ? "rounded-[3px] border border-[#5F7288] bg-linear-to-br from-[#F4F9FD] to-[#D3E4F4] shadow-[inset_0_0_0_1px_#fff]"
                  : "rounded-[3px] border border-[#5F7288] bg-linear-to-br from-[#DCE9F6] to-[#B0CCE8] shadow-[inset_0_0_0_1px_#dbe9f6]"
                : ""
            }`}
          >
            {icon}
          </div>
        </div>
      ))}
    </div>
    <Tray />
  </footer>
);

export default function App() {
  return (
    <div className="h-[768px] w-[1360px] overflow-hidden bg-[#F0F0F0] font-['Noto_Sans','Open_Sans',sans-serif] text-black">
      <TitleBar />
      <MenuBar />
      <main className="flex h-[685px]">
        <Settings />
        <Viewport />
      </main>
      <Taskbar />
    </div>
  );
}
